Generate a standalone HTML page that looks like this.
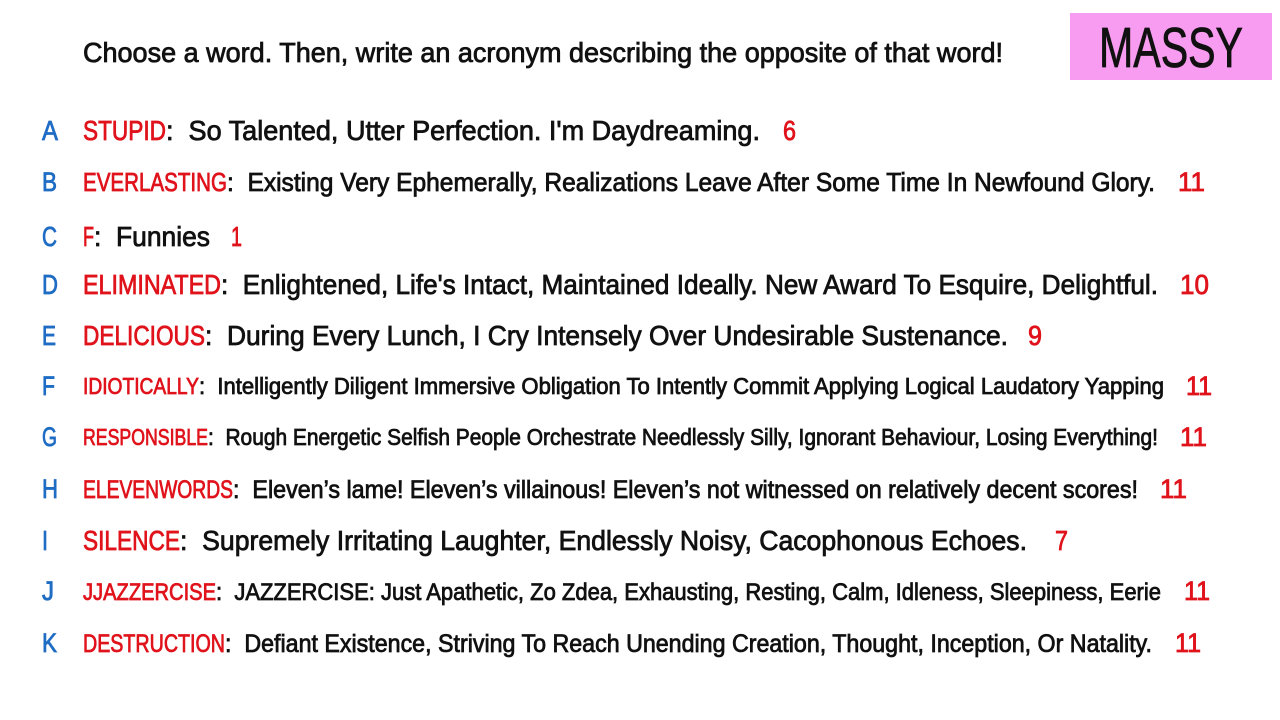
<!DOCTYPE html>
<html><head><meta charset="utf-8"><style>
html,body{margin:0;padding:0;background:#fff;}
svg{display:block;}
text{font-family:"Liberation Sans Narrow","Liberation Sans",sans-serif;stroke-width:0.8;}
.r{fill:#e0121b;stroke:#e0121b;}
.k{fill:#111;stroke:#111;}
.b{fill:#1f6cc4;stroke:#1f6cc4;}
</style></head><body>
<svg width="1280" height="720" xmlns="http://www.w3.org/2000/svg">
<rect x="1070" y="13" width="202" height="67" fill="#f79cf0"/>
<text x="1099" y="67" font-size="57" textLength="144" lengthAdjust="spacingAndGlyphs" class="k">MASSY</text>
<text x="83" y="62" font-size="28" textLength="920" lengthAdjust="spacingAndGlyphs" class="k">Choose a word. Then, write an acronym describing the opposite of that word!</text>

<g>
<text x="42" y="140" font-size="28" textLength="16" lengthAdjust="spacingAndGlyphs" class="b">A</text>
<text x="83" y="140" font-size="28" textLength="83" lengthAdjust="spacingAndGlyphs" class="r">STUPID</text>
<text x="166" y="140" font-size="28" textLength="594" lengthAdjust="spacingAndGlyphs" class="k">:&#160; So Talented, Utter Perfection. I'm Daydreaming.</text>
<text x="783" y="140" font-size="28" textLength="13" lengthAdjust="spacingAndGlyphs" class="r">6</text>

<text x="42" y="191" font-size="27" textLength="15" lengthAdjust="spacingAndGlyphs" class="b">B</text>
<text x="83" y="191" font-size="26" textLength="144" lengthAdjust="spacingAndGlyphs" class="r">EVERLASTING</text>
<text x="227" y="191" font-size="26" textLength="928" lengthAdjust="spacingAndGlyphs" class="k">:&#160; Existing Very Ephemerally, Realizations Leave After Some Time In Newfound Glory.</text>
<text x="1178" y="191" font-size="27" textLength="27" lengthAdjust="spacingAndGlyphs" class="r">11</text>

<text x="42" y="246" font-size="28" textLength="15" lengthAdjust="spacingAndGlyphs" class="b">C</text>
<text x="83" y="246" font-size="28" textLength="11" lengthAdjust="spacingAndGlyphs" class="r">F</text>
<text x="94" y="246" font-size="28" textLength="116" lengthAdjust="spacingAndGlyphs" class="k">:&#160; Funnies</text>
<text x="231" y="246" font-size="28" textLength="11" lengthAdjust="spacingAndGlyphs" class="r">1</text>

<text x="42" y="294" font-size="28" textLength="16" lengthAdjust="spacingAndGlyphs" class="b">D</text>
<text x="83" y="294" font-size="28" textLength="138" lengthAdjust="spacingAndGlyphs" class="r">ELIMINATED</text>
<text x="221" y="294" font-size="28" textLength="937" lengthAdjust="spacingAndGlyphs" class="k">:&#160; Enlightened, Life's Intact, Maintained Ideally. New Award To Esquire, Delightful.</text>
<text x="1180" y="294" font-size="28" textLength="29" lengthAdjust="spacingAndGlyphs" class="r">10</text>

<text x="42" y="345" font-size="28" textLength="14" lengthAdjust="spacingAndGlyphs" class="b">E</text>
<text x="83" y="345" font-size="28" textLength="122" lengthAdjust="spacingAndGlyphs" class="r">DELICIOUS</text>
<text x="205" y="345" font-size="28" textLength="803" lengthAdjust="spacingAndGlyphs" class="k">:&#160; During Every Lunch, I Cry Intensely Over Undesirable Sustenance.</text>
<text x="1028" y="345" font-size="28" textLength="14" lengthAdjust="spacingAndGlyphs" class="r">9</text>

<text x="42" y="395" font-size="27" textLength="13" lengthAdjust="spacingAndGlyphs" class="b">F</text>
<text x="83" y="394" font-size="23" textLength="116" lengthAdjust="spacingAndGlyphs" class="r">IDIOTICALLY</text>
<text x="199" y="394" font-size="23" textLength="965" lengthAdjust="spacingAndGlyphs" class="k">:&#160; Intelligently Diligent Immersive Obligation To Intently Commit Applying Logical Laudatory Yapping</text>
<text x="1186" y="395" font-size="27" textLength="26" lengthAdjust="spacingAndGlyphs" class="r">11</text>

<text x="42" y="446" font-size="27" textLength="15" lengthAdjust="spacingAndGlyphs" class="b">G</text>
<text x="83" y="445" font-size="23" textLength="125" lengthAdjust="spacingAndGlyphs" class="r">RESPONSIBLE</text>
<text x="208" y="445" font-size="23" textLength="950" lengthAdjust="spacingAndGlyphs" class="k">:&#160; Rough Energetic Selfish People Orchestrate Needlessly Silly, Ignorant Behaviour, Losing Everything!</text>
<text x="1180" y="446" font-size="27" textLength="27" lengthAdjust="spacingAndGlyphs" class="r">11</text>

<text x="42" y="498" font-size="27" textLength="16" lengthAdjust="spacingAndGlyphs" class="b">H</text>
<text x="83" y="498" font-size="25" textLength="150" lengthAdjust="spacingAndGlyphs" class="r">ELEVENWORDS</text>
<text x="233" y="498" font-size="25" textLength="905" lengthAdjust="spacingAndGlyphs" class="k">:&#160; Eleven’s lame! Eleven’s villainous! Eleven’s not witnessed on relatively decent scores!</text>
<text x="1160" y="498" font-size="27" textLength="27" lengthAdjust="spacingAndGlyphs" class="r">11</text>

<text x="42" y="550" font-size="28" textLength="6" lengthAdjust="spacingAndGlyphs" class="b">I</text>
<text x="83" y="550" font-size="28" textLength="97" lengthAdjust="spacingAndGlyphs" class="r">SILENCE</text>
<text x="180" y="550" font-size="28" textLength="847" lengthAdjust="spacingAndGlyphs" class="k">:&#160; Supremely Irritating Laughter, Endlessly Noisy, Cacophonous Echoes.</text>
<text x="1055" y="550" font-size="28" textLength="13" lengthAdjust="spacingAndGlyphs" class="r">7</text>

<text x="42" y="600" font-size="27" textLength="12" lengthAdjust="spacingAndGlyphs" class="b">J</text>
<text x="83" y="600" font-size="24" textLength="133" lengthAdjust="spacingAndGlyphs" class="r">JJAZZERCISE</text>
<text x="216" y="600" font-size="24" textLength="945" lengthAdjust="spacingAndGlyphs" class="k">:&#160; JAZZERCISE: Just Apathetic, Zo Zdea, Exhausting, Resting, Calm, Idleness, Sleepiness, Eerie</text>
<text x="1184" y="600" font-size="27" textLength="26" lengthAdjust="spacingAndGlyphs" class="r">11</text>

<text x="42" y="652" font-size="27" textLength="15" lengthAdjust="spacingAndGlyphs" class="b">K</text>
<text x="83" y="652" font-size="25" textLength="142" lengthAdjust="spacingAndGlyphs" class="r">DESTRUCTION</text>
<text x="225" y="652" font-size="25" textLength="927" lengthAdjust="spacingAndGlyphs" class="k">:&#160; Defiant Existence, Striving To Reach Unending Creation, Thought, Inception, Or Natality.</text>
<text x="1175" y="652" font-size="27" textLength="26" lengthAdjust="spacingAndGlyphs" class="r">11</text>
</g>
</svg>
</body></html>
